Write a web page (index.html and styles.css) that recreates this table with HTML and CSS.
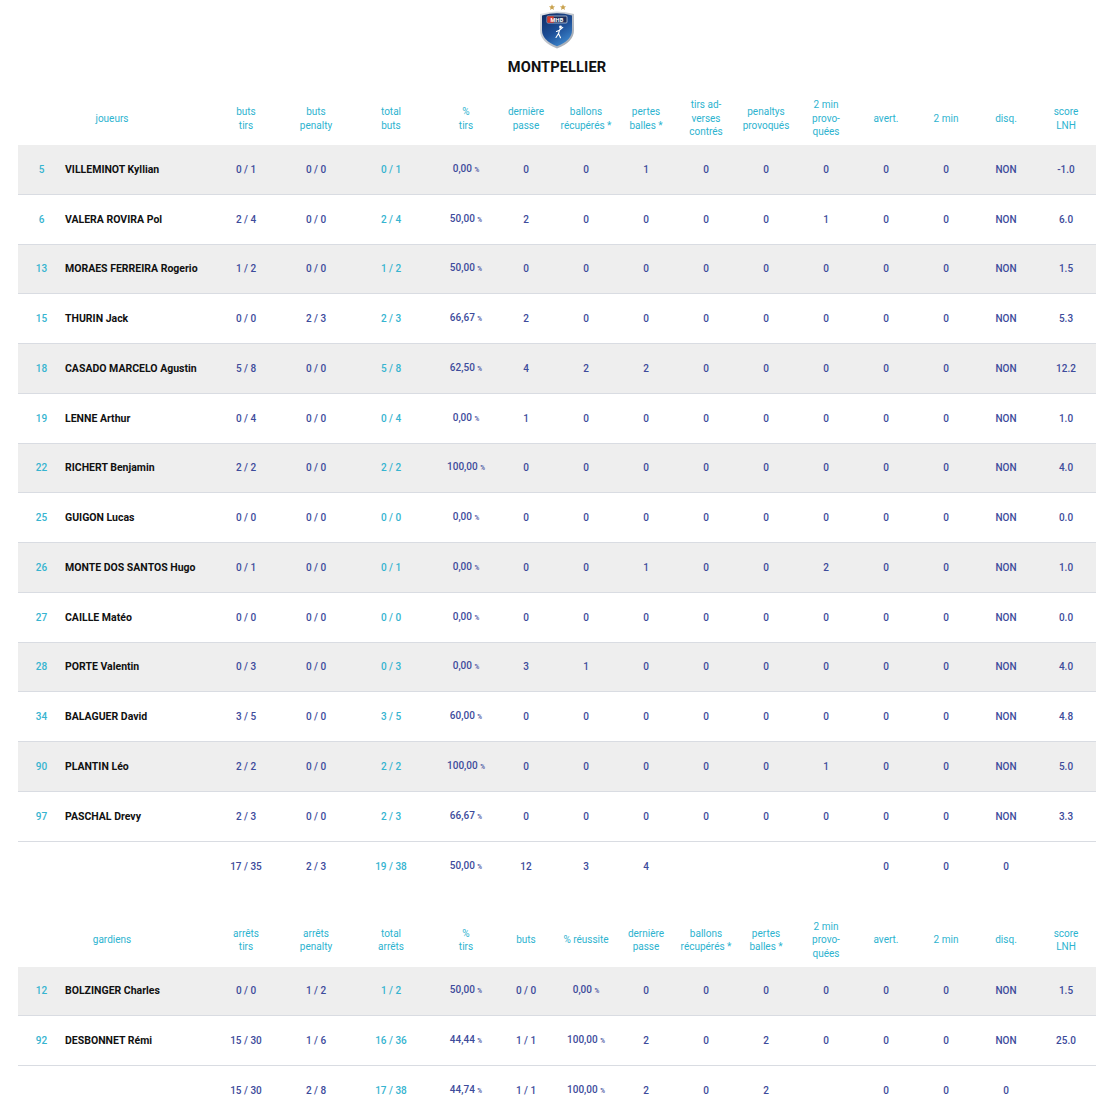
FILE: index.html
```html
<!DOCTYPE html>
<html lang="fr">
<head>
<meta charset="utf-8">
<title>MONTPELLIER</title>
<link rel="stylesheet" href="styles.css">
</head>
<body>
<div class="page">
  <div class="team">
    <svg class="logo" width="40" height="50" viewBox="0 0 40 50" aria-hidden="true">
      <defs>
        <linearGradient id="sh" x1="0" y1="0" x2="0.6" y2="1">
          <stop offset="0" stop-color="#0f2a62"/>
          <stop offset="0.6" stop-color="#1d4f98"/>
          <stop offset="1" stop-color="#3a82c8"/>
        </linearGradient>
        <linearGradient id="rim" x1="0" y1="0" x2="1" y2="1">
          <stop offset="0" stop-color="#e6e8ec"/>
          <stop offset="1" stop-color="#9aa1ab"/>
        </linearGradient>
      </defs>
      <polygon points="15,4.2 15.9,6.3 18.1,6.4 16.4,7.8 17,10 15,8.8 13,10 13.6,7.8 11.9,6.4 14.1,6.3" fill="#c9a24e"/>
      <polygon points="26,4.2 26.9,6.3 29.1,6.4 27.4,7.8 28,10 26,8.8 24,10 24.6,7.8 22.9,6.4 25.1,6.3" fill="#c9a24e"/>
      <path d="M3 14 Q20 9 37 14 L37 30 Q37 42 20 48.5 Q3 42 3 30 Z" fill="url(#rim)"/>
      <path d="M5 15.4 Q20 11 35 15.4 L35 30 Q35 40.5 20 46.3 Q5 40.5 5 30 Z" fill="url(#sh)"/>
      <rect x="10" y="16" width="20" height="7" rx="1" fill="#1a2f5e" stroke="#e9ecf1" stroke-width="0.6"/>
      <rect x="10.3" y="16.3" width="6.5" height="6.4" fill="#d33a2c"/>
      <text x="20" y="21.8" text-anchor="middle" class="logo-text">MHB</text>
      <circle cx="23.5" cy="27" r="1.4" fill="#ffffff"/>
      <path d="M23 28.8 L21.5 33.5 L19 37.5 M21.5 33.5 L23.5 37.8 M22.6 30 L25.8 27.4 M22.4 30.2 L19.5 31.5" stroke="#ffffff" stroke-width="1.1" fill="none" stroke-linecap="round"/>
    </svg>
    <div class="team-name">MONTPELLIER</div>
  </div>

  <div class="stats">
    <div class="row head">
      <div class="cell lbl span2">joueurs</div>
      <div class="cell lbl">buts<br>tirs</div>
      <div class="cell lbl">buts<br>penalty</div>
      <div class="cell lbl">total<br>buts</div>
      <div class="cell lbl">%<br>tirs</div>
      <div class="cell lbl">dernière<br>passe</div>
      <div class="cell lbl">ballons<br>récupérés *</div>
      <div class="cell lbl">pertes<br>balles *</div>
      <div class="cell lbl">tirs ad-<br>verses<br>contrés</div>
      <div class="cell lbl">penaltys<br>provoqués</div>
      <div class="cell lbl">2 min<br>provo-<br>quées</div>
      <div class="cell lbl">avert.</div>
      <div class="cell lbl">2 min</div>
      <div class="cell lbl">disq.</div>
      <div class="cell lbl">score<br>LNH</div>
    </div>

    <div class="row body odd"><div class="cell num">5</div><div class="cell name">VILLEMINOT Kyllian</div><div class="cell">0 / 1</div><div class="cell">0 / 0</div><div class="cell tot">0 / 1</div><div class="cell">0,00 <small>%</small></div><div class="cell">0</div><div class="cell">0</div><div class="cell">1</div><div class="cell">0</div><div class="cell">0</div><div class="cell">0</div><div class="cell">0</div><div class="cell">0</div><div class="cell">NON</div><div class="cell">-1.0</div></div>
    <div class="row body"><div class="cell num">6</div><div class="cell name">VALERA ROVIRA Pol</div><div class="cell">2 / 4</div><div class="cell">0 / 0</div><div class="cell tot">2 / 4</div><div class="cell">50,00 <small>%</small></div><div class="cell">2</div><div class="cell">0</div><div class="cell">0</div><div class="cell">0</div><div class="cell">0</div><div class="cell">1</div><div class="cell">0</div><div class="cell">0</div><div class="cell">NON</div><div class="cell">6.0</div></div>
    <div class="row body odd"><div class="cell num">13</div><div class="cell name">MORAES FERREIRA Rogerio</div><div class="cell">1 / 2</div><div class="cell">0 / 0</div><div class="cell tot">1 / 2</div><div class="cell">50,00 <small>%</small></div><div class="cell">0</div><div class="cell">0</div><div class="cell">0</div><div class="cell">0</div><div class="cell">0</div><div class="cell">0</div><div class="cell">0</div><div class="cell">0</div><div class="cell">NON</div><div class="cell">1.5</div></div>
    <div class="row body"><div class="cell num">15</div><div class="cell name">THURIN Jack</div><div class="cell">0 / 0</div><div class="cell">2 / 3</div><div class="cell tot">2 / 3</div><div class="cell">66,67 <small>%</small></div><div class="cell">2</div><div class="cell">0</div><div class="cell">0</div><div class="cell">0</div><div class="cell">0</div><div class="cell">0</div><div class="cell">0</div><div class="cell">0</div><div class="cell">NON</div><div class="cell">5.3</div></div>
    <div class="row body odd"><div class="cell num">18</div><div class="cell name">CASADO MARCELO Agustin</div><div class="cell">5 / 8</div><div class="cell">0 / 0</div><div class="cell tot">5 / 8</div><div class="cell">62,50 <small>%</small></div><div class="cell">4</div><div class="cell">2</div><div class="cell">2</div><div class="cell">0</div><div class="cell">0</div><div class="cell">0</div><div class="cell">0</div><div class="cell">0</div><div class="cell">NON</div><div class="cell">12.2</div></div>
    <div class="row body"><div class="cell num">19</div><div class="cell name">LENNE Arthur</div><div class="cell">0 / 4</div><div class="cell">0 / 0</div><div class="cell tot">0 / 4</div><div class="cell">0,00 <small>%</small></div><div class="cell">1</div><div class="cell">0</div><div class="cell">0</div><div class="cell">0</div><div class="cell">0</div><div class="cell">0</div><div class="cell">0</div><div class="cell">0</div><div class="cell">NON</div><div class="cell">1.0</div></div>
    <div class="row body odd"><div class="cell num">22</div><div class="cell name">RICHERT Benjamin</div><div class="cell">2 / 2</div><div class="cell">0 / 0</div><div class="cell tot">2 / 2</div><div class="cell">100,00 <small>%</small></div><div class="cell">0</div><div class="cell">0</div><div class="cell">0</div><div class="cell">0</div><div class="cell">0</div><div class="cell">0</div><div class="cell">0</div><div class="cell">0</div><div class="cell">NON</div><div class="cell">4.0</div></div>
    <div class="row body"><div class="cell num">25</div><div class="cell name">GUIGON Lucas</div><div class="cell">0 / 0</div><div class="cell">0 / 0</div><div class="cell tot">0 / 0</div><div class="cell">0,00 <small>%</small></div><div class="cell">0</div><div class="cell">0</div><div class="cell">0</div><div class="cell">0</div><div class="cell">0</div><div class="cell">0</div><div class="cell">0</div><div class="cell">0</div><div class="cell">NON</div><div class="cell">0.0</div></div>
    <div class="row body odd"><div class="cell num">26</div><div class="cell name">MONTE DOS SANTOS Hugo</div><div class="cell">0 / 1</div><div class="cell">0 / 0</div><div class="cell tot">0 / 1</div><div class="cell">0,00 <small>%</small></div><div class="cell">0</div><div class="cell">0</div><div class="cell">1</div><div class="cell">0</div><div class="cell">0</div><div class="cell">2</div><div class="cell">0</div><div class="cell">0</div><div class="cell">NON</div><div class="cell">1.0</div></div>
    <div class="row body"><div class="cell num">27</div><div class="cell name">CAILLE Matéo</div><div class="cell">0 / 0</div><div class="cell">0 / 0</div><div class="cell tot">0 / 0</div><div class="cell">0,00 <small>%</small></div><div class="cell">0</div><div class="cell">0</div><div class="cell">0</div><div class="cell">0</div><div class="cell">0</div><div class="cell">0</div><div class="cell">0</div><div class="cell">0</div><div class="cell">NON</div><div class="cell">0.0</div></div>
    <div class="row body odd"><div class="cell num">28</div><div class="cell name">PORTE Valentin</div><div class="cell">0 / 3</div><div class="cell">0 / 0</div><div class="cell tot">0 / 3</div><div class="cell">0,00 <small>%</small></div><div class="cell">3</div><div class="cell">1</div><div class="cell">0</div><div class="cell">0</div><div class="cell">0</div><div class="cell">0</div><div class="cell">0</div><div class="cell">0</div><div class="cell">NON</div><div class="cell">4.0</div></div>
    <div class="row body"><div class="cell num">34</div><div class="cell name">BALAGUER David</div><div class="cell">3 / 5</div><div class="cell">0 / 0</div><div class="cell tot">3 / 5</div><div class="cell">60,00 <small>%</small></div><div class="cell">0</div><div class="cell">0</div><div class="cell">0</div><div class="cell">0</div><div class="cell">0</div><div class="cell">0</div><div class="cell">0</div><div class="cell">0</div><div class="cell">NON</div><div class="cell">4.8</div></div>
    <div class="row body odd"><div class="cell num">90</div><div class="cell name">PLANTIN Léo</div><div class="cell">2 / 2</div><div class="cell">0 / 0</div><div class="cell tot">2 / 2</div><div class="cell">100,00 <small>%</small></div><div class="cell">0</div><div class="cell">0</div><div class="cell">0</div><div class="cell">0</div><div class="cell">0</div><div class="cell">1</div><div class="cell">0</div><div class="cell">0</div><div class="cell">NON</div><div class="cell">5.0</div></div>
    <div class="row body"><div class="cell num">97</div><div class="cell name">PASCHAL Drevy</div><div class="cell">2 / 3</div><div class="cell">0 / 0</div><div class="cell tot">2 / 3</div><div class="cell">66,67 <small>%</small></div><div class="cell">0</div><div class="cell">0</div><div class="cell">0</div><div class="cell">0</div><div class="cell">0</div><div class="cell">0</div><div class="cell">0</div><div class="cell">0</div><div class="cell">NON</div><div class="cell">3.3</div></div>

    <div class="row foot"><div class="cell span2"></div><div class="cell">17 / 35</div><div class="cell">2 / 3</div><div class="cell tot">19 / 38</div><div class="cell">50,00 <small>%</small></div><div class="cell">12</div><div class="cell">3</div><div class="cell">4</div><div class="cell"></div><div class="cell"></div><div class="cell"></div><div class="cell">0</div><div class="cell">0</div><div class="cell">0</div><div class="cell"></div></div>
  </div>

  <div class="stats keepers">
    <div class="row head">
      <div class="cell lbl span2">gardiens</div>
      <div class="cell lbl">arrêts<br>tirs</div>
      <div class="cell lbl">arrêts<br>penalty</div>
      <div class="cell lbl">total<br>arrêts</div>
      <div class="cell lbl">%<br>tirs</div>
      <div class="cell lbl">buts</div>
      <div class="cell lbl">% réussite</div>
      <div class="cell lbl">dernière<br>passe</div>
      <div class="cell lbl">ballons<br>récupérés *</div>
      <div class="cell lbl">pertes<br>balles *</div>
      <div class="cell lbl">2 min<br>provo-<br>quées</div>
      <div class="cell lbl">avert.</div>
      <div class="cell lbl">2 min</div>
      <div class="cell lbl">disq.</div>
      <div class="cell lbl">score<br>LNH</div>
    </div>
    <div class="row body odd"><div class="cell num">12</div><div class="cell name">BOLZINGER Charles</div><div class="cell">0 / 0</div><div class="cell">1 / 2</div><div class="cell tot">1 / 2</div><div class="cell">50,00 <small>%</small></div><div class="cell">0 / 0</div><div class="cell">0,00 <small>%</small></div><div class="cell">0</div><div class="cell">0</div><div class="cell">0</div><div class="cell">0</div><div class="cell">0</div><div class="cell">0</div><div class="cell">NON</div><div class="cell">1.5</div></div>
    <div class="row body"><div class="cell num">92</div><div class="cell name">DESBONNET Rémi</div><div class="cell">15 / 30</div><div class="cell">1 / 6</div><div class="cell tot">16 / 36</div><div class="cell">44,44 <small>%</small></div><div class="cell">1 / 1</div><div class="cell">100,00 <small>%</small></div><div class="cell">2</div><div class="cell">0</div><div class="cell">2</div><div class="cell">0</div><div class="cell">0</div><div class="cell">0</div><div class="cell">NON</div><div class="cell">25.0</div></div>
    <div class="row foot"><div class="cell span2"></div><div class="cell">15 / 30</div><div class="cell">2 / 8</div><div class="cell tot">17 / 38</div><div class="cell">44,74 <small>%</small></div><div class="cell">1 / 1</div><div class="cell">100,00 <small>%</small></div><div class="cell">2</div><div class="cell">0</div><div class="cell">2</div><div class="cell"></div><div class="cell">0</div><div class="cell">0</div><div class="cell">0</div><div class="cell"></div></div>
  </div>
</div>
</body>
</html>
```

FILE: styles.css
```css
* { box-sizing: border-box; }
html, body { margin: 0; padding: 0; background: #ffffff; }
body {
  font-family: Roboto, "Liberation Sans", Arial, sans-serif;
  color: #3d4b9b;
}
.page {
  width: 1078px;
  margin-left: 18px;
}
.team {
  display: flex;
  flex-direction: column;
  align-items: center;
}
.logo { display: block; }
.logo-text {
  font-family: Roboto, "Liberation Sans", sans-serif;
  font-size: 5.6px;
  font-weight: 700;
  fill: #ffffff;
  letter-spacing: 0.2px;
}
.team-name {
  margin-top: 8px;
  font-size: 14.6px;
  line-height: 18px;
  font-weight: 700;
  color: #111111;
  letter-spacing: 0.1px;
}
.stats { margin-top: 16px; }
.stats.keepers { margin-top: 23px; }
.row {
  display: grid;
  grid-template-columns: 47px 141px 80px 60px 90px 60px repeat(10, 60px);
  align-items: center;
}
.row.head { height: 53px; }
.row.body {
  height: 49.75px;
  border-bottom: 1px solid #d9dce2;
}
.row.body.odd { background: #eeeeee; }
.row.foot { height: 49px; }
.cell {
  text-align: center;
  font-size: 10px;
  font-weight: 500;
  line-height: 13px;
  white-space: nowrap;
}
.cell small { font-size: 6.5px; font-weight: 500; }
.span2 { grid-column: span 2; }
.lbl {
  font-size: 10px;
  font-weight: 400;
  line-height: 13.5px;
  color: #2db3cf;
}
.num { color: #36b4d0; font-weight: 500; }
.name {
  text-align: left;
  color: #111111;
  font-weight: 700;
  font-size: 10.5px;
}
.tot { color: #36b4d0; }
```
